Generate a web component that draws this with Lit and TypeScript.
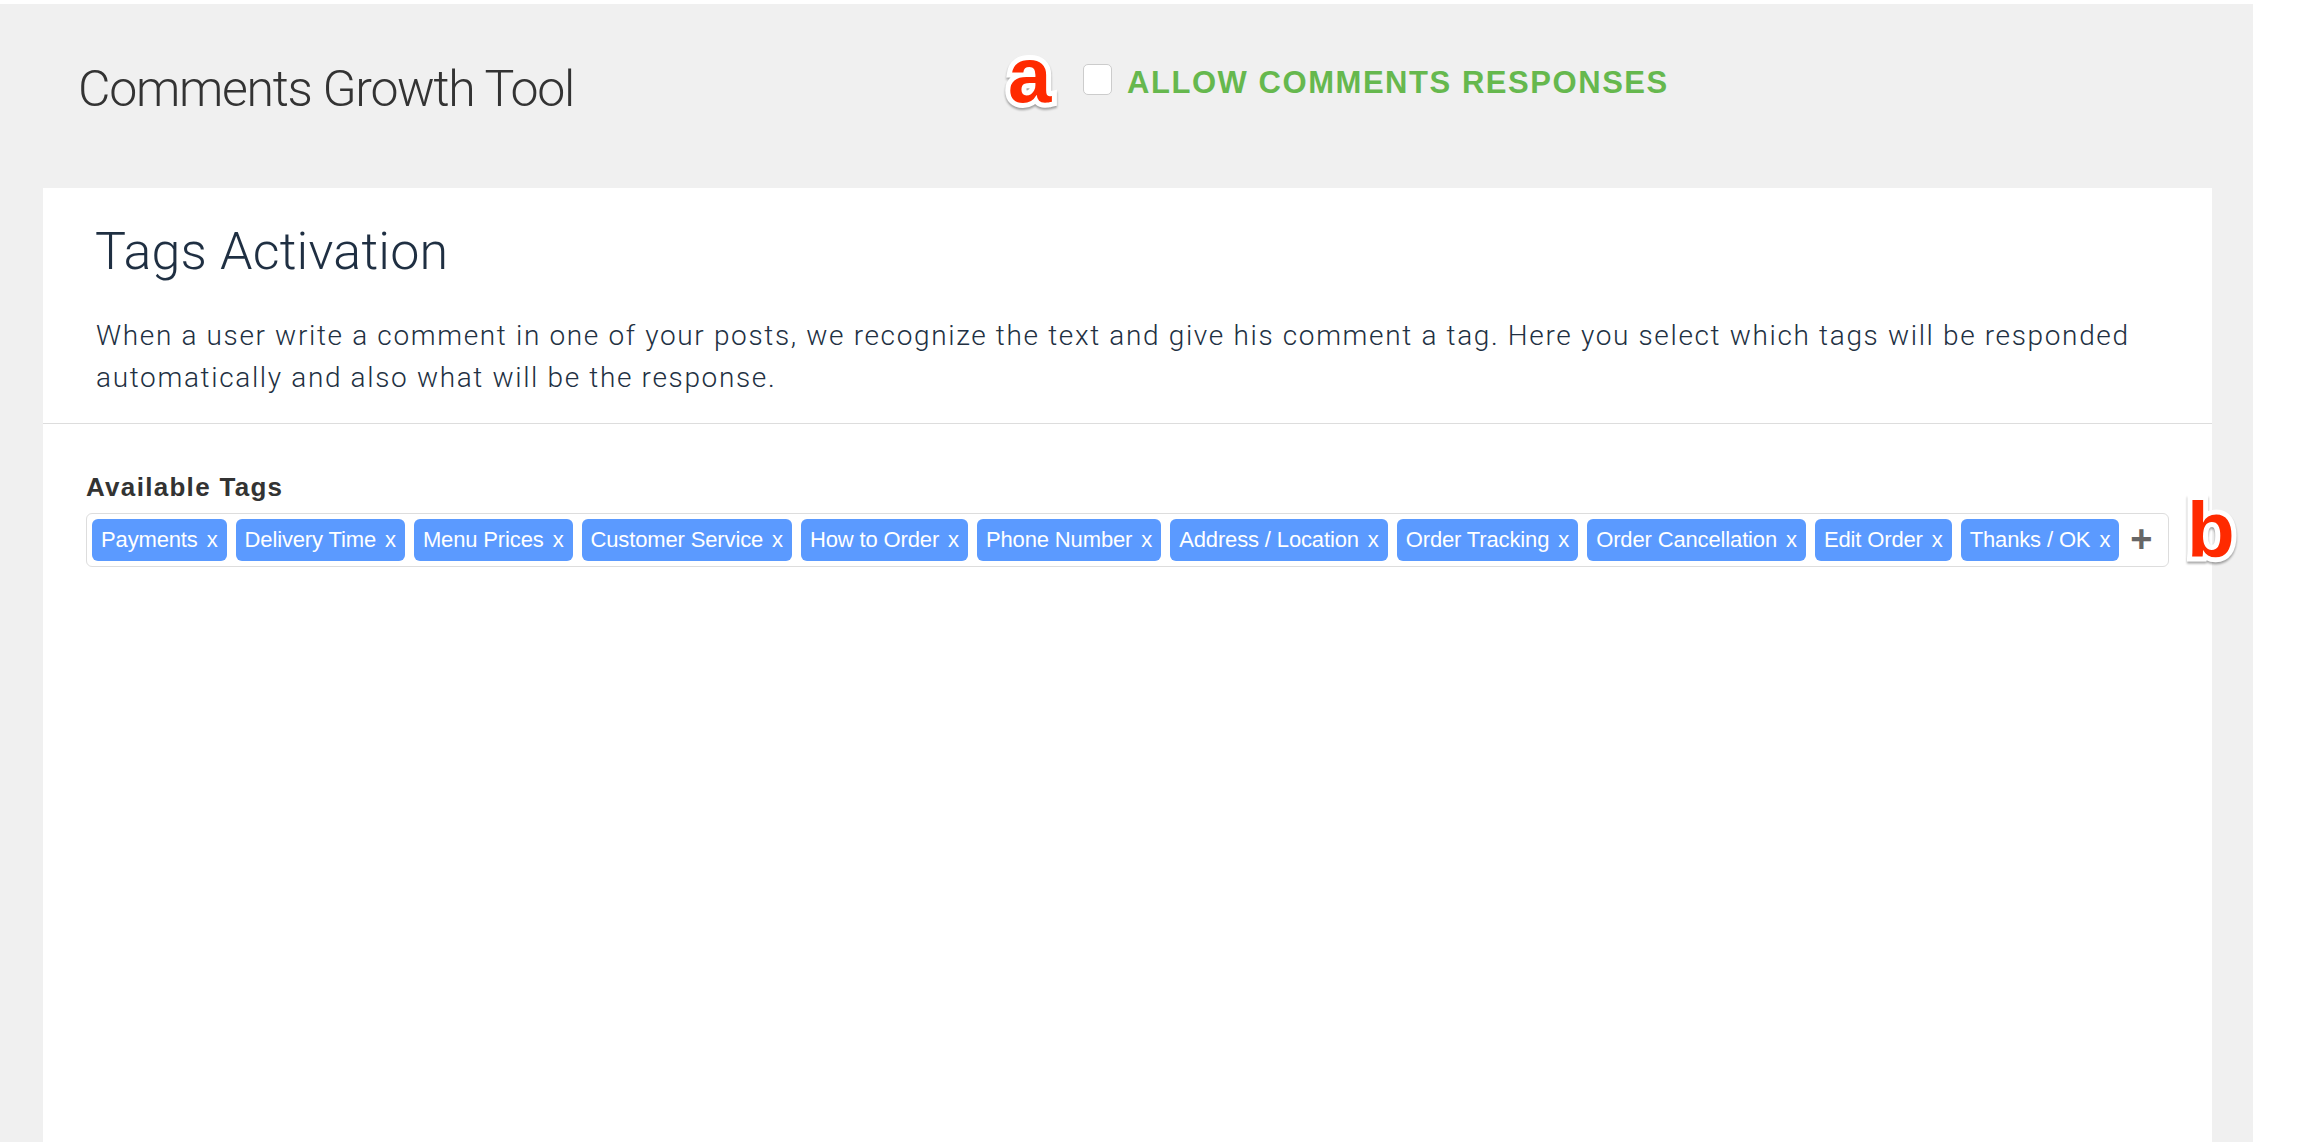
import { LitElement, html, css } from "lit";
import { customElement } from "lit/decorators.js";

const TAGS = ["Payments","Delivery Time","Menu Prices","Customer Service","How to Order","Phone Number","Address / Location","Order Tracking","Order Cancellation","Edit Order","Thanks / OK"];

@customElement("app-root")
export class AppRoot extends LitElement {
  static styles = css`
    :host { display: block; height: 1142px; overflow: hidden; background: #fff; font-family: "Liberation Sans", Arial, sans-serif; }
    .page { position: relative; width: 2253px; height: 1138px; margin-top: 4px; background: #f0f0f0; display: flex; flex-direction: column; box-sizing: border-box; }
    .head { height: 184px; display: flex; flex: none; box-sizing: border-box; }
    h1 { margin: 0; padding: 50px 0 0 78px; width: 1083px; box-sizing: border-box; font: 300 50px/70px Roboto, sans-serif; color: #333; letter-spacing: -1.3px; white-space: nowrap; }
    .allow { display: flex; align-items: flex-start; padding-top: 60px; }
    .check { width: 29px; height: 31px; box-sizing: border-box; background: #fff; border: 1px solid #ccc; border-radius: 5px; }
    .allow-label { margin-left: 15px; padding-top: 1px; font: 700 31px/36px "Liberation Sans", sans-serif; color: #66b84e; letter-spacing: 1.55px; white-space: nowrap; }
    .card { margin: 0 41px 0 43px; flex: 1; background: #fff; min-height: 0; }
    .card-head { padding: 34px 52px 0 52px; height: 236px; box-sizing: border-box; border-bottom: 1px solid #ddd; }
    h2 { margin: 0; font: 300 52px/60px Roboto, sans-serif; color: #1f2f42; letter-spacing: 0.2px; }
    p { margin: 33px 0 0 1px; font: 300 28px/42px Roboto, sans-serif; color: #223042; letter-spacing: 1.65px; }
    .body { padding: 49px 43px 0 43px; }
    .label { font: 700 26px/28px "Liberation Sans", sans-serif; color: #333; letter-spacing: 1.3px; }
    .tags { margin-top: 12px; height: 54px; box-sizing: border-box; border: 1px solid #ddd; border-radius: 6px; padding: 5px 5px; display: flex; gap: 9px; align-items: flex-start; }
    .tag { height: 42px; box-sizing: border-box; padding: 0 9px; background: #5b9aff; color: #fff; border-radius: 6px; font: 400 22px/42px "Liberation Sans", sans-serif; letter-spacing: -0.14px; white-space: nowrap; display: flex; gap: 9px; }
    .plus { margin-left: 2px; color: #666; font: 700 38px/40px "Liberation Sans", sans-serif; }
    .mark { position: absolute; font: 700 78px/74px "Liberation Sans", sans-serif; color: #ff2a00; -webkit-text-stroke: 10px #fff; paint-order: stroke fill; filter: drop-shadow(0 2px 1px rgba(0,0,0,.35)); }
    .a { left: 1008px; top: 34px; }
    .b { left: 2187px; top: 489px; }
  `;

  render() {
    return html`<div class="page">
      <div class="head">
        <h1>Comments Growth Tool</h1>
        <div class="allow"><div class="check"></div><div class="allow-label">ALLOW COMMENTS RESPONSES</div></div>
      </div>
      <div class="card">
        <div class="card-head">
          <h2>Tags Activation</h2>
          <p>When a user write a comment in one of your posts, we recognize the text and give his comment a tag. Here you select which tags will be responded automatically and also what will be the response.</p>
        </div>
        <div class="body">
          <div class="label">Available Tags</div>
          <div class="tags">
            ${TAGS.map(t => html`<span class="tag"><span>${t}</span><span>x</span></span>`)}
            <span class="plus">+</span>
          </div>
        </div>
      </div>
      <span class="mark a">a</span>
      <span class="mark b">b</span>
    </div>`;
  }
}
